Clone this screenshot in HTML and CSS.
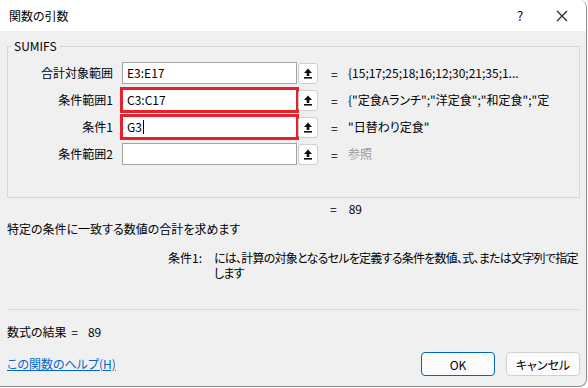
FILE: index.html
```html
<!DOCTYPE html>
<html>
<head>
	<link rel="stylesheet" href="styles.css">
</head>
<body>
	<div class="dialog">
		<div class="titlebar">
			<span class="title">関数の引数</span>
			<span class="help">?</span>
			<svg class="close" width="12" height="12" viewBox="0 0 12 12"><path d="M1 1L11 11M11 1L1 11" stroke="#222" stroke-width="1.1" fill="none"/></svg>
		</div>
		<div class="content">
			<fieldset class="group">
				<legend>SUMIFS</legend>
				<div class="row">
					<label>合計対象範囲</label>
					<div class="box">E3:E17</div>
					<div class="pick"><svg width="10" height="11" viewBox="0 0 10 11"><path d="M5 0.5L9 5H6.3V8H3.7V5H1Z" fill="#111"/><rect x="1" y="9" width="8" height="1.6" fill="#111"/></svg></div>
					<span class="eq">=</span>
					<span class="val">{15;17;25;18;16;12;30;21;35;1...</span>
				</div>
				<div class="row">
					<label>条件範囲1</label>
					<div class="box hl">C3:C17</div>
					<div class="pick"><svg width="10" height="11" viewBox="0 0 10 11"><path d="M5 0.5L9 5H6.3V8H3.7V5H1Z" fill="#111"/><rect x="1" y="9" width="8" height="1.6" fill="#111"/></svg></div>
					<span class="eq">=</span>
					<span class="val">{"定食Aランチ";"洋定食";"和定食";"定</span>
				</div>
				<div class="row">
					<label>条件1</label>
					<div class="box hl">G3<span class="caret"></span></div>
					<div class="pick"><svg width="10" height="11" viewBox="0 0 10 11"><path d="M5 0.5L9 5H6.3V8H3.7V5H1Z" fill="#111"/><rect x="1" y="9" width="8" height="1.6" fill="#111"/></svg></div>
					<span class="eq">=</span>
					<span class="val">"日替わり定食"</span>
				</div>
				<div class="row">
					<label>条件範囲2</label>
					<div class="box"></div>
					<div class="pick"><svg width="10" height="11" viewBox="0 0 10 11"><path d="M5 0.5L9 5H6.3V8H3.7V5H1Z" fill="#111"/><rect x="1" y="9" width="8" height="1.6" fill="#111"/></svg></div>
					<span class="eq">=</span>
					<span class="val muted">参照</span>
				</div>
			</fieldset>
			<div class="total"><span class="eq2">=</span>89</div>
			<div class="desc">特定の条件に一致する数値の合計を求めます</div>
			<div class="argdesc">
				<span class="argname">条件1:</span>
				<span class="argtext">には、計算の対象となるセルを定義する条件を数値、式、または文字列で指定します</span>
			</div>
			<div class="sep"></div>
			<div class="result">数式の結果 <span class="eq3">=</span>89</div>
			<div class="footer">
				<a href="#" class="helplink">この関数のヘルプ(H)</a>
				<div class="buttons">
					<button class="btn primary">OK</button>
					<button class="btn">キャンセル</button>
				</div>
			</div>
		</div>
	</div>
</body>
</html>
```

FILE: styles.css
```css
body {margin:0;background:#fff;font-family:"Noto Sans CJK JP","Noto Sans",sans-serif;font-size:12px;color:#000;font-feature-settings:"palt";}
.dialog {width:587px;height:387px;box-sizing:border-box;border-right:1px solid #8c8c8c;border-bottom:1px solid #8c8c8c;border-radius:0 8px 8px 0;overflow:hidden;display:flex;flex-direction:column;background:#f0f0f0;}
.titlebar {height:31px;flex:none;background:#fff;display:flex;align-items:center;padding-left:9px;}
.title {flex:1;line-height:16px;}
.help {width:16px;text-align:center;margin-right:28px;font-size:13px;}
.close {margin-right:18px;}
.content {flex:1;padding:0 6px 0 7px;display:flex;flex-direction:column;}

.group {margin:8px 0 0;padding:9px 0 32px;border:1px solid #d7d7d7;min-width:0;}
.group legend {margin-left:3px;padding:0 3px;line-height:14px;font-size:12px;}
.row {display:flex;align-items:center;height:22px;margin-bottom:5px;}
.row:last-child {margin-bottom:0;}
.row label {width:105px;text-align:right;margin-right:9px;line-height:16px;}
.box {width:169px;height:20px;border:1px solid #a4a4a4;background:#fff;line-height:20px;padding-left:4px;display:flex;align-items:center;}
.box.hl {outline:3px solid #e8202a;outline-offset:-1px;}
.caret {display:inline-block;width:1px;height:14px;background:#000;margin-left:1px;}
.pick {width:20px;height:21px;margin-left:1px;border:1px solid #cfcfcf;border-radius:3px;background:#fdfdfd;display:flex;align-items:center;justify-content:center;box-sizing:border-box;}
.eq {margin-left:13px;width:17px;}
.val {width:210px;white-space:nowrap;overflow:hidden;line-height:16px;}
.muted {color:#9a9a9a;}

.total {margin-top:3px;line-height:16px;padding-left:323px;}
.eq2 {margin-right:12px;}
.desc {margin-top:4px;line-height:16px;}
.argdesc {margin-top:13px;display:flex;line-height:15px;}
.argname {width:195px;text-align:right;flex:none;margin-right:12px;}
.argtext {width:372px;letter-spacing:-0.75px;}
.sep {margin-top:29px;height:1px;background:#d9d9d9;}
.result {margin-top:14px;line-height:16px;}
.eq3 {margin:0 10px 0 2px;}
.footer {margin-top:12px;display:flex;align-items:center;height:24px;}
.helplink {flex:1;color:#0066cc;text-decoration:underline;line-height:16px;}
.buttons {display:flex;gap:11px;}
.btn {width:74px;height:24px;font-family:inherit;font-size:12px;font-feature-settings:"palt";background:#fbfbfb;border:1px solid #d0d0d0;border-radius:4px;padding:0;color:#000;}
.btn.primary {border:1.5px solid #0067c0;}
```
